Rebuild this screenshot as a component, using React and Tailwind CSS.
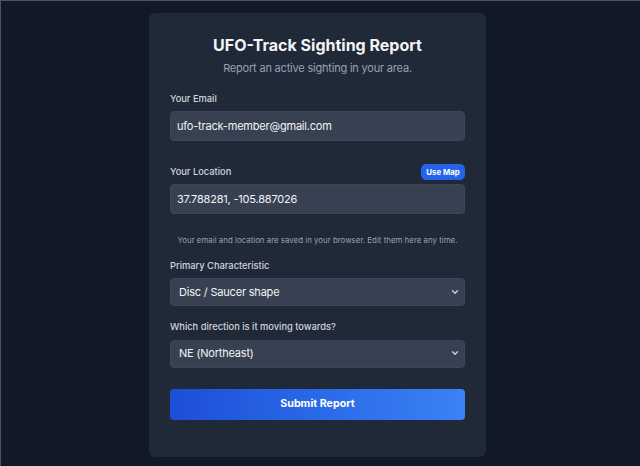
import React, { useState } from "react";

function Chevron() {
  return (
    <svg
      className="pointer-events-none absolute right-[6px] top-1/2 -translate-y-1/2 h-[6px] w-[8px] text-gray-300"
      viewBox="0 0 8 6"
      fill="none"
    >
      <path d="M1.5 1.8L4 4.2L6.5 1.8" stroke="currentColor" strokeWidth="1.3" strokeLinecap="round" strokeLinejoin="round" />
    </svg>
  );
}

function Field({ label, children }) {
  return (
    <div>
      <div className="flex items-center justify-between h-[14px] mb-[5px]">
        <label className="text-[9.3px] leading-[14px] font-medium text-gray-300">{label}</label>
      </div>
      {children}
    </div>
  );
}

export default function App() {
  const [email, setEmail] = useState("ufo-track-member@gmail.com");
  const [location, setLocation] = useState("37.788281, -105.887026");
  const [shape, setShape] = useState("disc");
  const [direction, setDirection] = useState("NE");

  const inputClass =
    "w-full h-[30px] rounded-[4px] bg-[#374151] border border-[#3d4656] px-[6px] text-[11px] tracking-[-0.2px] text-gray-100 outline-none";
  const selectClass =
    "w-full h-[28px] appearance-none rounded-[4px] bg-[#374151] border border-[#3d4656] pl-[8px] pr-[18px] text-[11px] tracking-[-0.2px] text-gray-100 outline-none";

  return (
    <div
      className="h-[466px] w-full overflow-hidden border-t border-l border-[#4b5261] bg-[#111827] pr-[6px]"
      style={{ fontFamily: "Inter, 'Noto Sans', sans-serif" }}
    >
      <div className="mx-auto mt-[12px] w-[337px] h-[444px] rounded-[6px] bg-[#1f2937] px-[21px] pt-[22px]">
        <h1 className="text-center text-[16px] leading-[20px] font-bold text-gray-100">
          UFO-Track Sighting Report
        </h1>
        <p className="mt-[5px] text-center text-[11px] tracking-[-0.2px] leading-[16px] text-gray-400">
          Report an active sighting in your area.
        </p>

        <form className="mt-[16px]" onSubmit={(e) => e.preventDefault()}>
          <Field label="Your Email">
            <input className={inputClass} value={email} onChange={(e) => setEmail(e.target.value)} />
          </Field>

          <div className="mt-[22px]">
            <div className="flex items-center justify-between h-[18px] mb-[3px]">
              <label className="text-[9.3px] leading-[14px] font-medium text-gray-300">Your Location</label>
              <button
                type="button"
                className="h-[16px] w-[44px] rounded-[5px] bg-[#2563eb] text-[7.8px] leading-[16px] font-bold text-white"
              >
                Use Map
              </button>
            </div>
            <input className={inputClass} value={location} onChange={(e) => setLocation(e.target.value)} />
          </div>

          <p className="mt-[20px] text-center text-[7.9px] leading-[12px] text-gray-400">
            Your email and location are saved in your browser. Edit them here any time.
          </p>

          <div className="mt-[13px]">
            <Field label="Primary Characteristic">
              <div className="relative">
                <select className={selectClass} value={shape} onChange={(e) => setShape(e.target.value)}>
                  <option value="disc">Disc / Saucer shape</option>
                  <option value="lights">Bright lights</option>
                  <option value="triangle">Triangle shape</option>
                </select>
                <Chevron />
              </div>
            </Field>
          </div>

          <div className="mt-[14px]">
            <Field label="Which direction is it moving towards?">
              <div className="relative">
                <select className={selectClass} value={direction} onChange={(e) => setDirection(e.target.value)}>
                  <option value="N">N (North)</option>
                  <option value="NE">NE (Northeast)</option>
                  <option value="E">E (East)</option>
                </select>
                <Chevron />
              </div>
            </Field>
          </div>

          <button
            type="submit"
            className="mt-[21px] h-[31px] w-full rounded-[4px] bg-gradient-to-r from-[#1d4ed8] to-[#3b82f6] text-[10.7px] font-bold text-white"
          >
            Submit Report
          </button>
        </form>
      </div>
    </div>
  );
}
